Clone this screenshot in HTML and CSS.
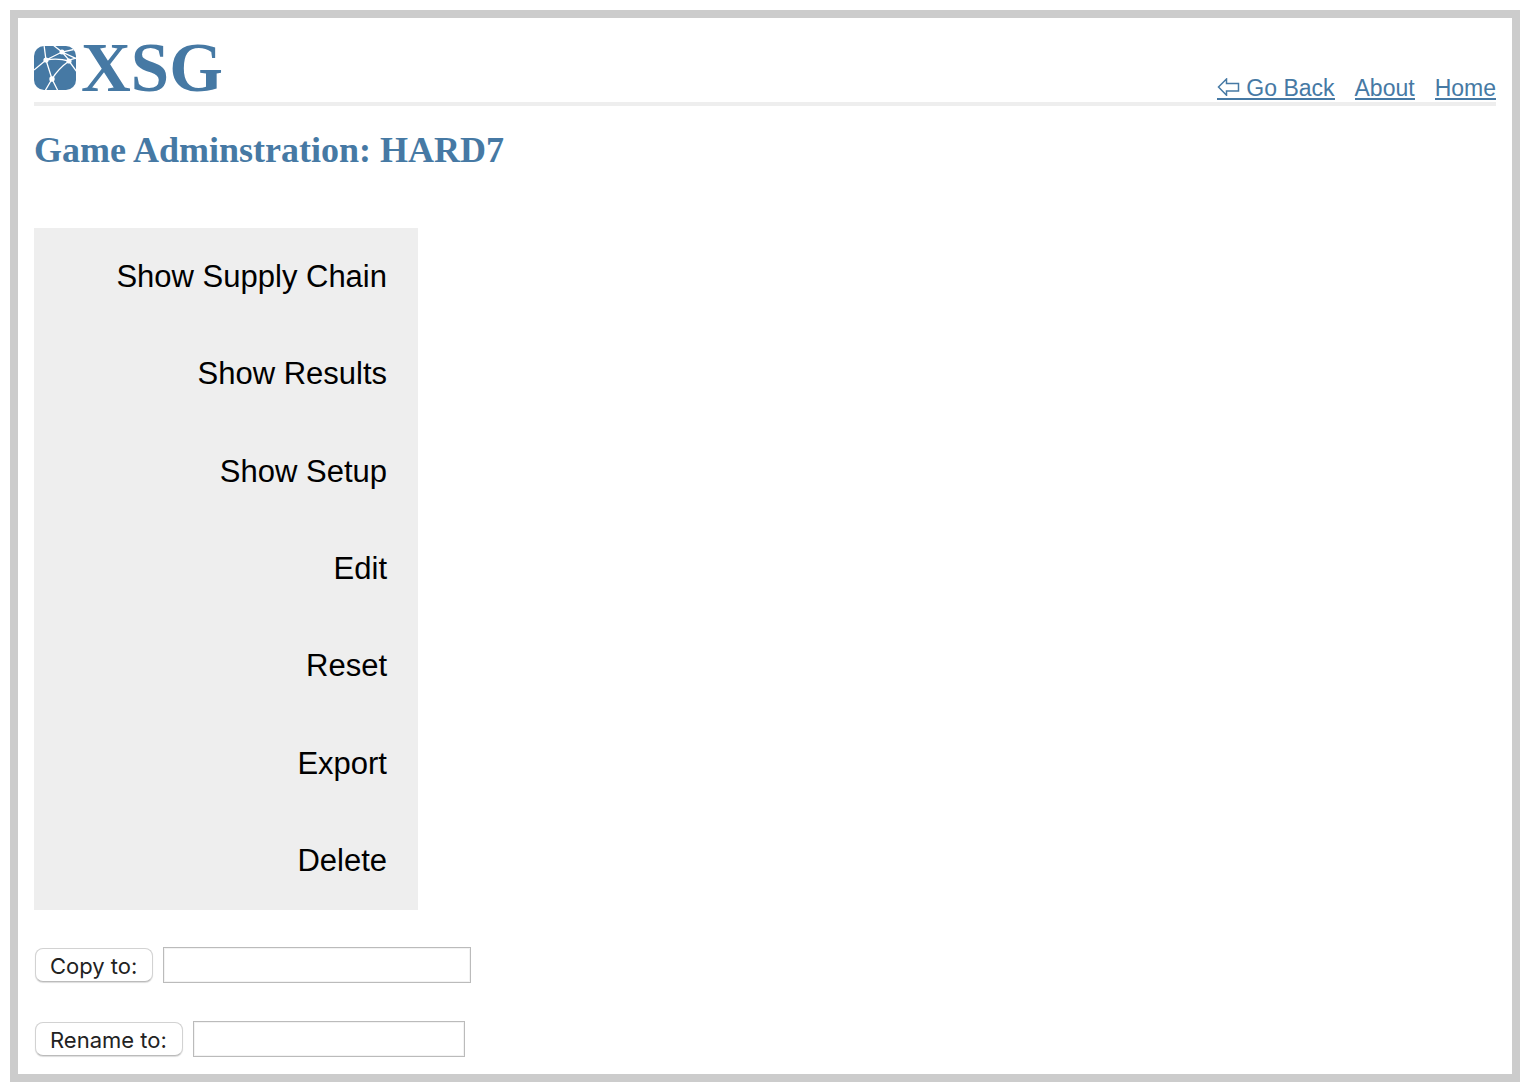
FILE: index.html
```html
<!DOCTYPE html>
<html lang="en">
<head>
<meta charset="utf-8">
<title>XSG - Game Administration</title>
<link rel="stylesheet" href="styles.css">
</head>
<body>
<div class="page">
  <header class="header">
    <div class="brand">
      <svg class="brand-icon" viewBox="0 0 42 44" aria-hidden="true">
        <defs><clipPath id="tile"><rect width="42" height="44" rx="10"/></clipPath></defs>
        <g clip-path="url(#tile)">
          <rect width="42" height="44" fill="#4679a4"/>
          <g fill="none" stroke="#fff" stroke-width="1.3">
            <path d="M10 -1L12 14L18 33L24 45M0 24L12 14L28 6L42 3M19 -1L28 6L35 14L42 12M12 14Q24 12 35 15L43 26M35 15Q24 23 18 33L11 45M28 6L43 13"/>
          </g>
          <g fill="#fff"><circle cx="12" cy="14" r="2.6"/><circle cx="28" cy="6" r="2.5"/><circle cx="35" cy="15" r="2.6"/><circle cx="18" cy="33" r="2.7"/></g>
        </g>
      </svg>
      <span class="brand-name">XSG</span>
    </div>
    <nav class="links">
      <a href="#back"><svg class="arrow" viewBox="0 0 23 18" aria-hidden="true"><path d="M1.5 9L9.5 1V5.5H21.5V13H9.5V17.2Z" fill="none" stroke="#4679a4" stroke-width="1.5"/></svg> Go Back</a>
      <a href="#about">About</a>
      <a href="#home">Home</a>
    </nav>
  </header>
  <main>
    <h1 class="title">Game Adminstration: HARD7</h1>
    <nav class="menu">
      <a href="#chain">Show Supply Chain</a>
      <a href="#results">Show Results</a>
      <a href="#setup">Show Setup</a>
      <a href="#edit">Edit</a>
      <a href="#reset">Reset</a>
      <a href="#export">Export</a>
      <a href="#delete">Delete</a>
    </nav>
    <form class="row">
      <button class="button" type="button" id="copy">Copy to:</button>
      <input class="field field-copy" type="text" aria-labelledby="copy">
    </form>
    <form class="row">
      <button class="button" type="button" id="rename">Rename to:</button>
      <input class="field field-rename" type="text" aria-labelledby="rename">
    </form>
  </main>
</div>
</body>
</html>
```
FILE: styles.css
```css
* {
  box-sizing: border-box;
}

body {
  margin: 10px 6px 10px 10px;
  background: #fff;
  color: #000;
  font-family: "Liberation Sans", Arial, sans-serif;
}

.page {
  padding: 16px;
  border: 8px solid #ccc;
}

.header {
  display: flex;
  justify-content: space-between;
  align-items: flex-end;
  height: 72px;
  border-bottom: 4px solid #eee;
}

.brand {
  display: flex;
  align-items: center;
  gap: 5px;
  height: 68px;
}

.brand-icon {
  width: 42px;
  height: 44px;
}

.brand-name {
  color: #4679a4;
  font: bold 69px/68px "Liberation Serif", "Times New Roman", serif;
}

.links {
  display: flex;
  gap: 20px;
  margin-bottom: 2px;
  font-size: 23px;
  line-height: 20px;
}

.links a {
  height: 22px;
  border-bottom: 2px solid #4679a4;
  color: #4679a4;
  text-decoration: none;
}

.arrow {
  width: 23px;
  height: 18px;
}

.title {
  margin: 24px 0 0;
  color: #4679a4;
  font: bold 36px/40px "Liberation Serif", "Times New Roman", serif;
}

.menu {
  display: grid;
  grid-auto-rows: 1fr;
  width: 384px;
  min-height: 682px;
  margin: 58px 0 37px;
  background: #eee;
}

.menu a {
  display: flex;
  align-items: center;
  justify-content: flex-end;
  padding: 0 31px;
  color: #000;
  font-size: 31px;
  line-height: 36px;
  text-decoration: none;
}

.row {
  display: flex;
  align-items: center;
  gap: 10px;
  margin-bottom: 38px;
  padding-left: 1px;
}

.row:last-child {
  margin-bottom: 1px;
}

.button {
  height: 34px;
  padding: 2px 15px 0 14px;
  border: 1px solid #d2d2d2;
  border-bottom-color: #bbb;
  border-radius: 8px;
  background: #fff;
  box-shadow: 0 1px 1px #ddd;
  color: #222;
  font: 22px/26px Inter, sans-serif;
}

.field {
  height: 36px;
  padding: 2px 6px;
  border: 1px solid #bbb;
  background: #fff;
  box-shadow: inset 0 0 0 1px #f3f3f3;
  font: 22px/26px Inter, sans-serif;
}

.field-copy {
  width: 308px;
}

.field-rename {
  width: 272px;
}
```
